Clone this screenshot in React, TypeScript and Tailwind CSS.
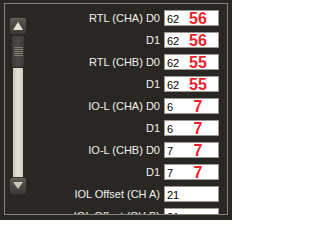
import React from "react";

type Row = { label: string; val: string; big?: string };

const rows: Row[] = [
  { label: "RTL (CHA) D0", val: "62", big: "56" },
  { label: "D1", val: "62", big: "56" },
  { label: "RTL (CHB) D0", val: "62", big: "55" },
  { label: "D1", val: "62", big: "55" },
  { label: "IO-L (CHA) D0", val: "6", big: "7" },
  { label: "D1", val: "6", big: "7" },
  { label: "IO-L (CHB) D0", val: "7", big: "7" },
  { label: "D1", val: "7", big: "7" },
  { label: "IOL Offset (CH A)", val: "21" },
  { label: "IOL Offset (CH B)", val: "21" },
];

function ScrollButton({ up }: { up: boolean }) {
  return (
    <div className="w-[18px] h-[18px] rounded-[3px] bg-gradient-to-b from-[#5a5852] to-[#3a3935] border border-[#2a2925] flex items-center justify-center shadow-[inset_0_1px_0_#6c6a63]">
      <svg width="10" height="8" viewBox="0 0 10 8">
        {up ? (
          <polygon points="5,0 10,8 0,8" fill="#e6e2d6" />
        ) : (
          <polygon points="0,0 10,0 5,7" fill="#c9c5b9" />
        )}
      </svg>
    </div>
  );
}

export default function App() {
  return (
    <div
      className="w-[232px] h-[220px] bg-[#292723] pt-[3px] pl-[4px]"
      style={{ fontFamily: '"Liberation Sans", Arial, sans-serif' }}
    >
      <div className="w-[224px] h-[212px] border border-[#858379] overflow-hidden flex">
        <div className="ml-[4px] mt-[13px] w-[18px] flex flex-col">
          <ScrollButton up />
          <div className="h-[33px] mx-[2px] rounded-b-[3px] bg-gradient-to-r from-[#3c3b37] via-[#4a4843] to-[#3c3b37] border border-[#2a2925] flex flex-col items-center justify-center gap-[1px]">
            <div className="w-[9px] h-[1px] bg-[#7d7b73]" />
            <div className="w-[9px] h-[1px] bg-[#7d7b73]" />
            <div className="w-[9px] h-[1px] bg-[#7d7b73]" />
            <div className="w-[9px] h-[1px] bg-[#7d7b73]" />
            <div className="w-[9px] h-[1px] bg-[#7d7b73]" />
          </div>
          <div className="h-[109px] mx-[4px] bg-gradient-to-r from-[#c9c5b8] via-[#e6e3d8] to-[#cfcbbe]" />
          <ScrollButton up={false} />
        </div>
        <div className="flex-1 flex flex-col pt-[6px] pr-[8px] gap-[6px]">
          {rows.map((r, i) => (
            <div key={i} className="flex items-center justify-end h-[16px] shrink-0">
              <span className="text-[11px] leading-[13px] text-[#f2f2ee] whitespace-nowrap mr-[4px] mt-[1px]">
                {r.label}
              </span>
              <div className="w-[55px] h-[16px] bg-white border border-[#9b998f] flex items-start">
                <span className="w-[22px] pl-[2px] pt-[2px] text-[11px] leading-[13px] text-black">
                  {r.val}
                </span>
                {r.big && (
                  <span className="w-[22px] text-center pt-[1px] text-[16px] leading-[14px] font-bold text-[#f01e28]">
                    {r.big}
                  </span>
                )}
              </div>
            </div>
          ))}
        </div>
      </div>
    </div>
  );
}
